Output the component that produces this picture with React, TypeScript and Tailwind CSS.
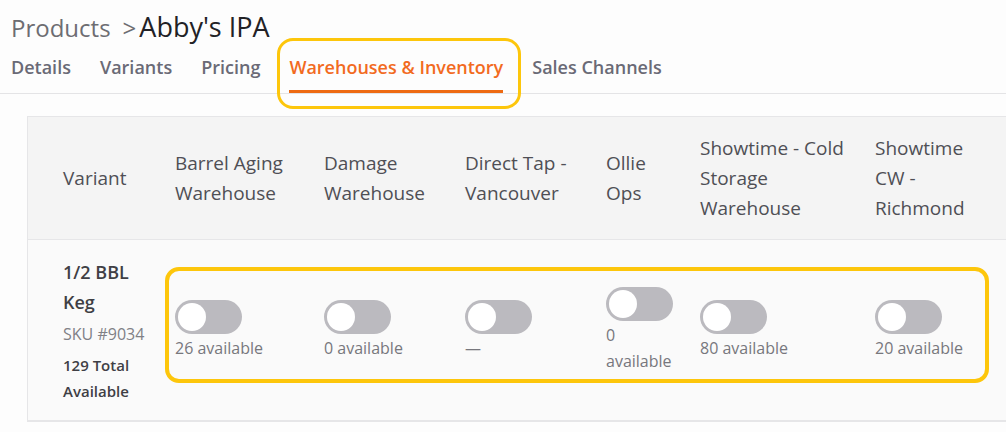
import React from "react";

const warehouses: string[][] = [
  ["Barrel Aging", "Warehouse"],
  ["Damage", "Warehouse"],
  ["Direct Tap -", "Vancouver"],
  ["Ollie", "Ops"],
  ["Showtime - Cold", "Storage", "Warehouse"],
  ["Showtime", "CW -", "Richmond"],
];

const stock: string[][] = [
  ["26 available"],
  ["0 available"],
  ["—"],
  ["0", "available"],
  ["80 available"],
  ["20 available"],
];

const cols = "grid grid-cols-[112px_149px_141px_141px_94px_175px_160px] pl-[35px]";

function Toggle() {
  return (
    <div className="relative h-[34px] w-[67px] rounded-full bg-[#bbbabf]">
      <div className="absolute left-[3px] top-[3px] h-[28px] w-[28px] rounded-full bg-white" />
    </div>
  );
}

export default function App() {
  const tabs = ["Details", "Variants", "Pricing", "Warehouses & Inventory", "Sales Channels"];

  return (
    <div className="relative h-[432px] w-[1006px] overflow-hidden bg-[#fdfdfd] font-['Open_Sans',sans-serif]">
      {/* Breadcrumb */}
      <div className="flex items-baseline pl-[11px] pt-[7px] text-[24px] leading-[40px]">
        <span className="text-[#6d6d72]">Products</span>
        <span className="ml-[12px] mr-[3px] text-[#6d6d72]">&gt;</span>
        <span className="text-[27px] font-medium text-[#222226]">Abby's IPA</span>
      </div>

      {/* Tabs */}
      <div className="flex gap-[29px] border-b border-[#e4e4e6] pl-[11px] pt-[5px]">
        {tabs.map((t, i) => (
          <div
            key={t}
            className={
              i === 3
                ? "border-b-[3px] border-[#ee6a12] pb-[9px] text-[18px] font-semibold leading-[28px] text-[#f26b1f]"
                : "border-b-[3px] border-transparent pb-[9px] text-[18px] font-semibold leading-[28px] text-[#6a6a76]"
            }
          >
            {t}
          </div>
        ))}
      </div>

      {/* Inventory table */}
      <div className="ml-[27px] mt-[22px] w-[1100px] border border-[#e6e6e8]">
        <div className={`${cols} h-[123px] items-center border-b border-[#e6e6e8] bg-[#f4f4f4] text-[19px] leading-[30px] text-[#4f4f55]`}>
          <div>Variant</div>
          {warehouses.map((w, i) => (
            <div key={i}>
              {w.map((l) => (
                <div key={l}>{l}</div>
              ))}
            </div>
          ))}
        </div>

        <div className={`${cols} h-[181px] items-center border-b border-[#e6e6e8] bg-[#fafafa]`}>
          <div>
            <div className="text-[18px] font-semibold leading-[30px] text-[#3f3f45]">
              <div>1/2 BBL</div>
              <div>Keg</div>
            </div>
            <div className="mt-[4px] text-[16px] leading-[26px] text-[#808086]">SKU #9034</div>
            <div className="mt-[5px] text-[15px] font-semibold leading-[26px] text-[#3f3f45]">
              <div>129 Total</div>
              <div>Available</div>
            </div>
          </div>
          {stock.map((s, i) => (
            <div key={i} className="flex flex-col">
              <Toggle />
              <div className="mt-[1px] text-[16px] leading-[26px] text-[#77777d]">
                {s.map((l) => (
                  <div key={l}>{l}</div>
                ))}
              </div>
            </div>
          ))}
        </div>
      </div>

      {/* Highlight annotations */}
      <div className="pointer-events-none absolute left-[277px] top-[38px] h-[71px] w-[244px] rounded-[16px] border-[3px] border-[#fdc60b]" />
      <div className="pointer-events-none absolute left-[165px] top-[267px] h-[116px] w-[824px] rounded-[14px] border-[4px] border-[#fdc60b]" />
    </div>
  );
}
